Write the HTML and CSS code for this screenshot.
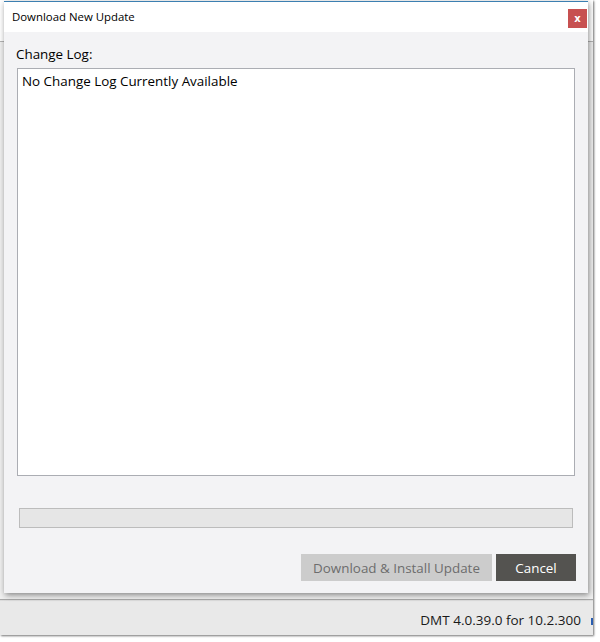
FILE: index.html
```html
<!DOCTYPE html>
<html>
<head>
<meta charset="utf-8">
<link rel="stylesheet" href="styles.css">
</head>
<body>
<div class="app">
  <div class="app-header"></div>
  <div class="app-main"></div>
  <div class="app-status"><span class="version">DMT 4.0.39.0 for 10.2.300</span><span class="cut"></span></div>
</div>
<div class="dialog">
  <div class="titlebar">
    <span class="title">Download New Update</span>
    <button class="close">x</button>
  </div>
  <div class="body">
    <div class="label">Change Log:</div>
    <div class="log">No Change Log Currently Available</div>
    <div class="progress"></div>
    <div class="actions">
      <button class="btn btn-download">Download &amp; Install Update</button>
      <button class="btn btn-cancel">Cancel</button>
    </div>
  </div>
</div>
</body>
</html>
```
FILE: styles.css
```css
html, body {
  margin: 0;
  padding: 0;
  background: #ffffff;
  font-family: "Open Sans", "Noto Sans", sans-serif;
}
body {
  width: 600px;
  height: 642px;
  position: relative;
  overflow: hidden;
}
.app {
  width: 593px;
  height: 635px;
  display: flex;
  flex-direction: column;
  background: #f0f0f0;
  box-shadow: 1px 1px 2px rgba(0, 0, 0, 0.55);
}
.app-header {
  height: 41px;
  background: #ffffff;
  border-bottom: 1px solid #b4b4b4;
}
.app-main {
  flex: 1;
  background: #f0f0f0;
  border-bottom: 1px solid #a8a8a8;
}
.app-status {
  height: 34px;
  background: #e9e9e9;
  border-top: 1px solid #dcdcdc;
  display: flex;
  justify-content: flex-end;
  align-items: center;
  font-size: 13.5px;
  color: #1a1a1a;
  overflow: hidden;
}
.version {
  margin-right: 10px;
  padding-top: 4px;
}
.cut {
  width: 2px;
  height: 7px;
  margin-top: 6px;
  background: #2a5db0;
}
.dialog {
  position: absolute;
  left: 4px;
  top: 1px;
  width: 584px;
  height: 591px;
  border-top: 1px solid #3c7fb1;
  display: flex;
  flex-direction: column;
  box-shadow: 1px 2px 6px rgba(0, 0, 0, 0.45);
  background: #f3f3f5;
}
.titlebar {
  height: 30px;
  background: #ffffff;
  display: flex;
  align-items: flex-start;
  justify-content: space-between;
}
.title {
  font-size: 11.4px;
  color: #000;
  margin-left: 8px;
  margin-top: 7px;
}
.close {
  width: 19px;
  height: 19px;
  margin-top: 7px;
  margin-right: 1px;
  border: 0;
  padding: 0;
  background: #c75050;
  color: #fff;
  font-family: "DejaVu Sans", sans-serif;
  font-weight: bold;
  font-size: 10px;
  line-height: 17px;
}
.body {
  flex: 1;
  display: flex;
  flex-direction: column;
  padding: 12px 13px 11px 13px;
}
.label {
  font-size: 13.4px;
  line-height: 20px;
  height: 20px;
  margin-left: -1px;
  margin-bottom: 4px;
  color: #000;
}
.log {
  height: 398px;
  background: #ffffff;
  border: 1px solid #abadb3;
  padding: 4px 4px;
  font-size: 13.4px;
  line-height: 17px;
  color: #000;
}
.progress {
  height: 18px;
  margin: 32px 2px 0 2px;
  background: #e6e6e6;
  border: 1px solid #bcbcbc;
}
.actions {
  margin-top: 26px;
  display: flex;
  justify-content: flex-end;
  gap: 4px;
  margin-right: -1px;
}
.btn {
  height: 27px;
  border: 0;
  padding: 0;
  font-family: "Open Sans", "Noto Sans", sans-serif;
  font-size: 13.4px;
}
.btn-download {
  width: 191px;
  background: #cccccc;
  color: #6d6d6d;
}
.btn-cancel {
  width: 80px;
  background: #545350;
  color: #ffffff;
}
```
